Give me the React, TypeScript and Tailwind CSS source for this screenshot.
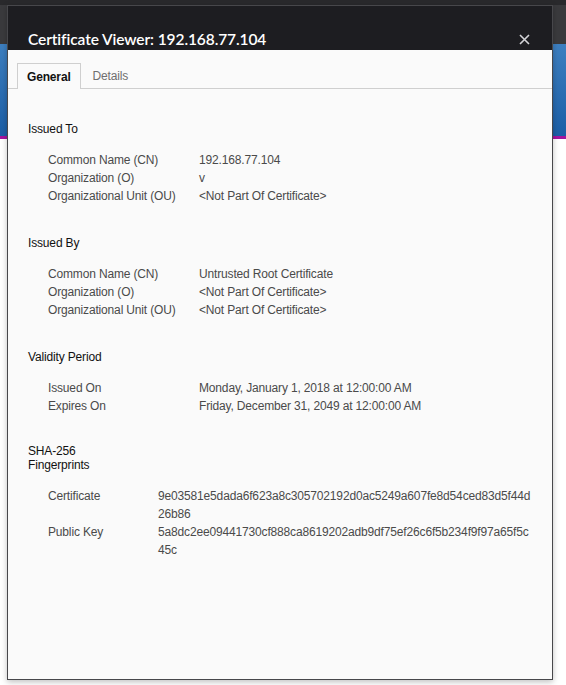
import React from "react";

const font = { fontFamily: '"Liberation Sans", Arial, sans-serif', letterSpacing: "-0.16px" };

function Row({ label, value, labelW }: { label: string; value: React.ReactNode; labelW: string }) {
  return (
    <div className="flex leading-[18px]">
      <div className={`${labelW} shrink-0`}>{label}</div>
      <div className="whitespace-nowrap">{value}</div>
    </div>
  );
}

function Section({ title, children, gap }: { title: React.ReactNode; children: React.ReactNode; gap: string }) {
  return (
    <div className={gap}>
      <div className="text-[#111] leading-[14px]">{title}</div>
      <div className="mt-[15px] pl-[20px] text-[#4a4a4a]">{children}</div>
    </div>
  );
}

export default function App() {
  return (
    <div className="relative w-[566px] h-[685px] overflow-hidden bg-white" style={font}>
      <div className="flex flex-col h-full">
        <div className="h-[5px] bg-[#29292c]" />
        <div className="h-[39px] bg-[#3a3a3d]" />
        <div className="h-[92px] bg-gradient-to-b from-[#3d7fc0] to-[#1b5ea6]" />
        <div className="h-[3px] bg-[#a4159e]" />
        <div className="flex-1 bg-white" />
      </div>
      <div className="absolute left-[7px] top-[5px] w-[546px] h-[675px] border border-[#47474b] flex flex-col shadow-[0_2px_6px_rgba(0,0,0,0.25)]">
        <div className="h-[44px] bg-[#1d1d21] flex items-start justify-between pl-[20px] pr-[22px] pt-[23px]">
          <div className="text-white text-[15.5px] leading-[20px] font-semibold" style={{ fontFamily: 'Lato, "Liberation Sans", sans-serif', letterSpacing: "-0.1px" }}>
            Certificate Viewer: 192.168.77.104
          </div>
          <svg width="11" height="11" viewBox="0 0 11 11" className="mt-[5px]">
            <path d="M1 1L10 10M10 1L1 10" stroke="#d4d4d8" strokeWidth="1.6" />
          </svg>
        </div>
        <div className="flex-1 bg-[#fafafa] text-[12px]">
          <div className="mt-[14px] flex items-end border-b border-[#cfcfcf] pl-[9px] h-[25px]">
            <div className="h-[26px] -mb-px border border-b-0 border-[#cfcfcf] bg-[#fafafa] px-[9px] flex items-center font-bold text-[#111]">
              General
            </div>
            <div className="h-[25px] px-[12px] flex items-center text-[#6f6f6f]">Details</div>
          </div>
          <div className="pl-[20px] pt-[33px]">
            <Section title="Issued To" gap="">
              <Row labelW="w-[151px]" label="Common Name (CN)" value="192.168.77.104" />
              <Row labelW="w-[151px]" label="Organization (O)" value="v" />
              <Row labelW="w-[151px]" label="Organizational Unit (OU)" value="<Not Part Of Certificate>" />
            </Section>
            <Section title="Issued By" gap="mt-[31px]">
              <Row labelW="w-[151px]" label="Common Name (CN)" value="Untrusted Root Certificate" />
              <Row labelW="w-[151px]" label="Organization (O)" value="<Not Part Of Certificate>" />
              <Row labelW="w-[151px]" label="Organizational Unit (OU)" value="<Not Part Of Certificate>" />
            </Section>
            <Section title="Validity Period" gap="mt-[31px]">
              <Row labelW="w-[151px]" label="Issued On" value="Monday, January 1, 2018 at 12:00:00 AM" />
              <Row labelW="w-[151px]" label="Expires On" value="Friday, December 31, 2049 at 12:00:00 AM" />
            </Section>
            <Section title={<>SHA-256<br />Fingerprints</>} gap="mt-[29px]">
              <Row
                labelW="w-[110px]"
                label="Certificate"
                value={<>9e03581e5dada6f623a8c305702192d0ac5249a607fe8d54ced83d5f44d<br />26b86</>}
              />
              <Row
                labelW="w-[110px]"
                label="Public Key"
                value={<>5a8dc2ee09441730cf888ca8619202adb9df75ef26c6f5b234f9f97a65f5c<br />45c</>}
              />
            </Section>
          </div>
        </div>
      </div>
    </div>
  );
}
